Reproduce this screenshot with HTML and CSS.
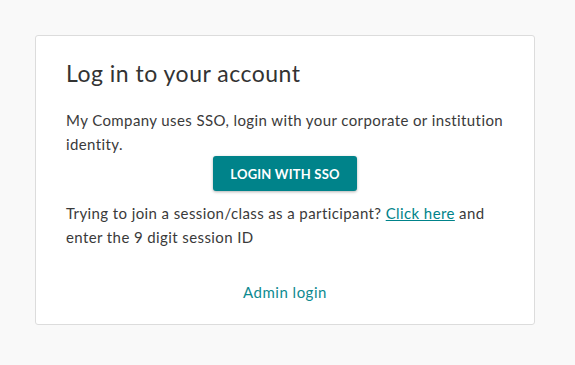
FILE: index.html
```html
<!DOCTYPE html>
<html>
<head>
<meta charset="utf-8">
<link rel="stylesheet" href="styles.css">
</head>
<body>
<div class="page">
  <div class="card">
    <h1 class="title">Log in to your account</h1>
    <p class="text">My Company uses SSO, login with your corporate or institution identity.</p>
    <div class="btn-row"><button class="btn">LOGIN WITH SSO</button></div>
    <p class="text join">Trying to join a session/class as a participant? <a class="link" href="#">Click here</a> and enter the 9 digit session ID</p>
    <div class="admin"><a class="admin-link" href="#">Admin login</a></div>
  </div>
</div>
</body>
</html>
```
FILE: styles.css
```css
html, body {
  margin: 0;
  padding: 0;
  background: #f9f9f9;
  font-family: Lato, "Open Sans", sans-serif;
  color: #333;
}
.page {
  padding: 35px 40px 0 35px;
}
.card {
  box-sizing: border-box;
  width: 500px;
  height: 290px;
  background: #fff;
  border: 1px solid #dcdcdc;
  border-radius: 3px;
  padding: 22px 30px 0 30px;
}
.title {
  margin: 0;
  font-size: 23px;
  font-weight: 400;
  line-height: 30px;
  letter-spacing: 0.5px;
  color: #333;
}
.text {
  margin: 0;
  font-size: 15px;
  line-height: 24px;
  letter-spacing: 0.4px;
  color: #3a3a3a;
}
.title + .text {
  margin-top: 20px;
}
.btn-row {
  display: flex;
  justify-content: center;
}
.btn {
  font-family: Lato, sans-serif;
  width: 144px;
  height: 35px;
  background: #00838a;
  color: #fff;
  border: none;
  border-radius: 3px;
  font-size: 13px;
  font-weight: 700;
  letter-spacing: 0.2px;
  box-shadow: 0 1px 3px rgba(0,0,0,0.3);
  padding: 0;
}
.join {
  margin-top: 10px;
}
.link {
  color: #00838a;
  text-decoration: underline;
}
.admin {
  text-align: center;
  margin-top: 33px;
}
.admin-link {
  color: #0d8a90;
  font-size: 15px;
  letter-spacing: 0.5px;
  text-decoration: none;
}
```
